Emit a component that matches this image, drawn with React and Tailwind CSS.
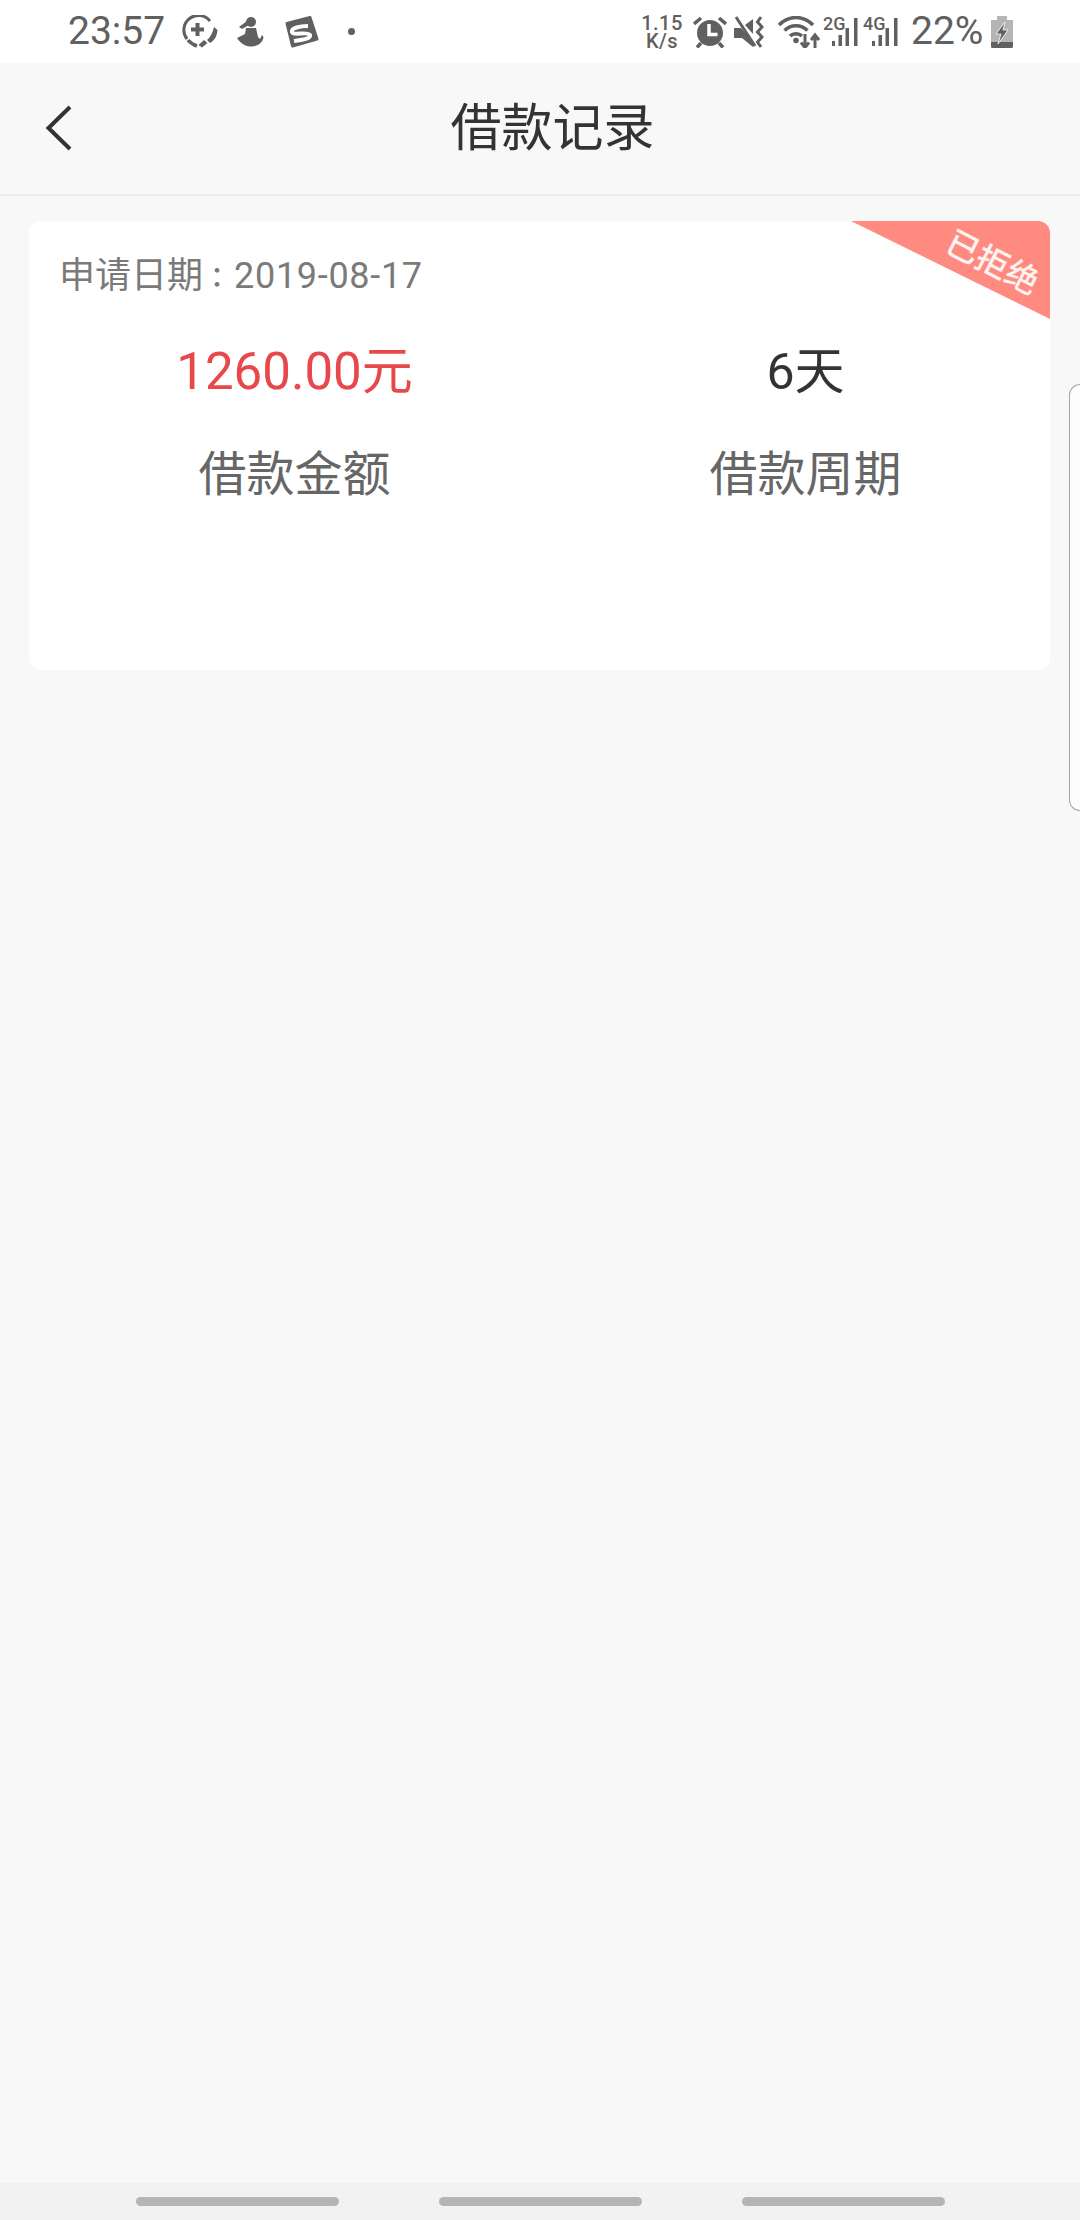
const FONT = "font-['Roboto','Noto_Sans_CJK_SC',sans-serif]";

function Plus() {
  return (
    <svg width="36" height="33" viewBox="0 0 36 33" fill="none">
      <path d="M5 24A14.500 14.500 0 0 1 28 6" stroke="#606060" strokeWidth="3" />
      <path d="M6 25Q9 29 15 31" stroke="#606060" strokeWidth="3.500" />
      <path d="M32 12L35.500 15Q35 24 28 28L25 25Q30 21 32 12Z" fill="#606060" />
      <path d="M22 25L25.500 28L20 32.500L16.500 30Z" fill="#606060" />
      <path d="M15.500 8V21M9 14.500H22" stroke="#606060" strokeWidth="4" />
    </svg>
  );
}
function Figure() {
  return (
    <svg width="27" height="30" viewBox="0 0 27 30" fill="#606060">
      <circle cx="14" cy="5" r="5" />
      <path d="M10 4L2 10L5 12L12 8Z" />
      <path d="M9 11H19L21 20L23 22L25 18L26.500 20C26 26 20 30 13 29.500C8 29 3 26 0 21L8 17Z" />
    </svg>
  );
}
function Sogou() {
  return (
    <svg width="34" height="32" viewBox="0 0 34 32">
      <path d="M2 7.500L25 1.500L32 23L7.500 30Z" fill="#606060" stroke="#606060" strokeWidth="3" strokeLinejoin="round" />
      <path d="M23 10C15 10 6 12 7 16C8 20 23 15 25 19C26 23 16 24 9 25" fill="none" stroke="#fff" strokeWidth="4" />
    </svg>
  );
}
function Alarm() {
  return (
    <svg width="34" height="32" viewBox="0 0 34 32">
      <circle cx="17" cy="17" r="13" fill="#606060" />
      <path d="M16 8V18.500H24.500" fill="none" stroke="#fff" strokeWidth="3.500" />
      <path d="M1 8L8 2M33 8L26 2M8 27L4 31.500M26 27L30 31.500" stroke="#606060" strokeWidth="3.500" />
    </svg>
  );
}
function Mute() {
  return (
    <svg width="30" height="32" viewBox="0 0 30 32">
      <path d="M0 12H7L19 26V31L8 22H0Z" fill="#606060" />
      <path d="M11 9L19 3V18Z" fill="#606060" />
      <path d="M2 1L21 30" stroke="#606060" strokeWidth="3" />
      <path d="M27 1L23.500 6L28 11L23.500 16L28 21L23.500 26L27 31" fill="none" stroke="#606060" strokeWidth="3" />
    </svg>
  );
}
function Wifi() {
  return (
    <svg width="42" height="32" viewBox="0 0 42 32" fill="none" stroke="#606060">
      <path d="M1 9C11 -1 25 -1 35 9" strokeWidth="3.500" />
      <path d="M6.500 14.500C13 8 23 8 29.500 14.500" strokeWidth="3.500" />
      <path d="M12 20C15 17 21 17 24 20" strokeWidth="3.500" />
      <circle cx="18" cy="24.500" r="2.800" fill="#606060" stroke="none" />
      <path d="M27 18V31M23 26.500L27 31.500L31 26.500" strokeWidth="3" />
      <path d="M37 32V20M33 24L37 19L41 24" strokeWidth="3" />
    </svg>
  );
}
function Signal({ label }) {
  return (
    <div className="relative w-[36px] h-[36px] shrink-0">
      <span className="absolute left-[1px] top-[1px] text-[18px] leading-[18px] font-medium text-[#606060]">{label}</span>
      <svg className="absolute left-0 top-0" width="36" height="36" viewBox="0 0 36 36" fill="#606060">
        <rect x="10" y="27" width="3" height="5" />
        <rect x="16.500" y="21" width="3.500" height="11" />
        <rect x="23.500" y="14" width="3.500" height="18" />
        <rect x="32" y="4" width="3.500" height="28" />
      </svg>
    </div>
  );
}
function Battery() {
  return (
    <svg width="22" height="32" viewBox="0 0 22 32">
      <rect x="6" y="0" width="10" height="4" fill="#b5b5b5" />
      <path d="M0 4H22V32H0Z" fill="#b5b5b5" />
      <path d="M0 26H22V30Q22 32 20 32H2Q0 32 0 30Z" fill="#606060" />
      <path d="M14 6L5 18H10L7 28L17 14H12Z" fill="#606060" stroke="#fff" strokeWidth="0.800" />
    </svg>
  );
}

export default function App() {
  return (
    <div className={`${FONT} relative w-[1080px] h-[2220px] flex flex-col overflow-hidden bg-[#f8f8f8]`}>
      <header className="h-[63px] shrink-0 bg-white flex items-center justify-between pl-[68px] pr-[67px] text-[#606060]">
        <div className="flex items-center">
          <span className="w-[97px] text-[39px] leading-none">23:57</span>
          <div className="ml-[17px]">
            <Plus />
          </div>
          <div className="ml-[19px]">
            <Figure />
          </div>
          <div className="ml-[21px]">
            <Sogou />
          </div>
          <span className="ml-[29px] w-[7px] h-[7px] rounded-full bg-[#606060]" />
        </div>
        <div className="flex items-center">
          <div className="w-[42px] flex flex-col items-center text-[20px] leading-[18px] font-medium tracking-[0.5px]">
            <span>1.15</span>
            <span>K/s</span>
          </div>
          <div className="ml-[10px]">
            <Alarm />
          </div>
          <div className="ml-[7px]">
            <Mute />
          </div>
          <div className="ml-[14px]">
            <Wifi />
          </div>
          <div className="ml-[2px] flex items-center gap-[4px]">
            <Signal label="2G" />
            <Signal label="4G" />
          </div>
          <span className="ml-[13px] w-[80px] text-[39px] leading-none">22%</span>
          <Battery />
        </div>
      </header>

      <nav className="relative h-[133px] shrink-0 flex items-center justify-center border-b-2 border-[#ececec]">
        <svg className="absolute left-[44px] top-[41px]" width="30" height="48" viewBox="0 0 30 48" fill="none">
          <path d="M26 3L4.500 24L26 45" stroke="#333333" strokeWidth="4" />
        </svg>
        <h1 className="ml-[25px] text-[51px] leading-none font-normal text-[#333333]">借款记录</h1>
      </nav>

      <main className="flex-1 pl-[29px] pr-[30px] pt-[25px]">
        <section className="relative h-[449px] rounded-[12px] bg-white overflow-hidden">
          <div className="absolute right-0 top-0 w-[199px] h-[98px] bg-[#ff8a80] [clip-path:polygon(0_0,100%_0,100%_100%)]" />
          <span className="absolute right-[8px] top-[25px] text-[33px] leading-none font-medium text-white/90 rotate-[27deg]">已拒绝</span>
          <p className="flex items-center pl-[30px] pt-[35px] text-[36px] leading-[40px] text-[#7a7a7a]">
            <span>申请日期</span>
            <span className="mr-[3px] text-[28px] font-medium font-['Noto_Sans_CJK_TC',sans-serif]">：</span>
            <span className="tracking-[0.7px]">2019-08-17</span>
          </p>
          <div className="mt-[48px] ml-[10px] grid grid-cols-[511px_511px] text-center">
            <div>
              <p className="text-[51px] leading-[56px] text-[#e8474c]">1260.00元</p>
              <p className="mt-[47px] text-[48px] leading-[56px] text-[#666666]">借款金额</p>
            </div>
            <div>
              <p className="text-[50px] leading-[56px] text-[#333333]">6天</p>
              <p className="mt-[47px] text-[48px] leading-[56px] text-[#666666]">借款周期</p>
            </div>
          </div>
        </section>
      </main>

      <footer className="h-[37px] shrink-0 bg-[#f2f2f2] pl-[136px] pt-[14px] flex gap-[100px]">
        <div className="w-[203px] h-[9px] rounded-full bg-[#b5b5b5]" />
        <div className="w-[203px] h-[9px] rounded-full bg-[#b5b5b5]" />
        <div className="w-[203px] h-[9px] rounded-full bg-[#b5b5b5]" />
      </footer>

      <div className="absolute right-0 top-[384px] w-[11px] h-[427px] bg-white/70 border-[1.500px] border-r-0 border-[#a8a8a8] rounded-l-[12px]" />
    </div>
  );
}
